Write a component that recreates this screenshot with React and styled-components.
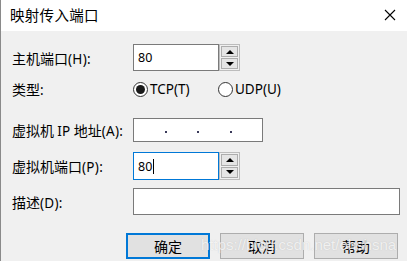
import React from 'react'
import styled, {createGlobalStyle} from "styled-components";

const GlobalStyle = createGlobalStyle`
  html, body {
    margin: 0;
    padding: 0;
    background: #f0f0f0;
  }
  * {
    box-sizing: border-box;
  }
`

const Dialog = styled.div`
  position: relative;
  width: 407px;
  height: 261px;
  background: #f0f0f0;
  border-left: 1px solid #8a8a8a;
  font-family: "Noto Sans CJK SC", "Noto Sans", sans-serif;
  color: #000;
  overflow: hidden;
`

const TitleBar = styled.div`
  height: 31px;
  background: #ffffff;
  display: flex;
  align-items: center;
  justify-content: space-between;
  padding: 0 11px 2px 9px;

  h1 {
    margin: 0;
    font-size: 14.5px;
    font-weight: 400;
    letter-spacing: 0.3px;
  }
`

const CloseIcon = styled.svg`
  width: 12px;
  height: 12px;
`

const Form = styled.div`
  padding: 0 0 0 11px;
`

const Row = styled.div`
  display: grid;
  grid-template-columns: 121px 1fr;
  align-items: center;
  height: ${p => p.$h}px;
  margin-top: ${p => p.$top}px;
`

const Label = styled.label`
  font-size: 14px;
  white-space: nowrap;

  small {
    font-family: "Noto Sans", sans-serif;
    font-size: 13.5px;
    letter-spacing: 0.3px;
  }
`

const Field = styled.div`
  display: flex;
  height: 100%;
`

const TextBox = styled.div`
  width: ${p => p.$w}px;
  height: 100%;
  background: #fff;
  border: 1px solid ${p => (p.$focus ? "#0078d7" : "#7a7a7a")};
  display: flex;
  align-items: center;
  padding-left: 4px;
  font-family: "Noto Sans", sans-serif;
  font-size: 12.5px;
`

const Caret = styled.span`
  display: inline-block;
  width: 1px;
  height: 15px;
  background: #000;
  margin-left: 1px;
`

const Spinner = styled.div`
  width: 21px;
  height: 100%;
  border: 1px solid #bcbcbc;
  display: flex;
  flex-direction: column;
  padding: 1px;
  gap: 1px;
  background: #f0f0f0;
`

const SpinButton = styled.div`
  flex: 1;
  background: #e5e5e5;
  border: 1px solid #adadad;
  display: flex;
  align-items: center;
  justify-content: center;

  &::after {
    content: "";
    border-left: 4px solid transparent;
    border-right: 4px solid transparent;
    ${p => (p.$down ? "border-top: 4px solid #000;" : "border-bottom: 4px solid #000;")}
  }
`

const RadioGroup = styled.div`
  display: flex;
  align-items: center;
`

const Radio = styled.div`
  display: flex;
  align-items: center;
  width: ${p => p.$w}px;
  font-family: "Noto Sans", sans-serif;
  font-size: 13.5px;
  gap: 2px;

  span.dot {
    width: 15px;
    height: 15px;
    border-radius: 50%;
    border: 1px solid #333;
    background: #fff;
    display: flex;
    align-items: center;
    justify-content: center;
  }

  span.dot::after {
    content: "";
    width: 9px;
    height: 9px;
    border-radius: 50%;
    background: ${p => (p.$checked ? "#1a1a1a" : "transparent")};
  }
`

const IpBox = styled(TextBox)`
  display: grid;
  grid-template-columns: 1fr 2px 1fr 2px 1fr 2px 1fr;
  align-items: center;
  padding: 4px 0 0 0;

  i {
    width: 2px;
    height: 2px;
    background: #3a3a5a;
  }
`

const Buttons = styled.div`
  display: flex;
  gap: 10px;
  margin-top: 18px;
  padding-left: 125px;
`

const Button = styled.button`
  width: 84px;
  height: 26px;
  font-family: "Noto Sans CJK SC", sans-serif;
  font-size: 14px;
  color: #000;
  background: #e1e1e1;
  border: ${p => (p.$primary ? "2px solid #0078d7" : "1px solid #adadad")};
  padding: 0;
`

const Watermark = styled.div`
  position: absolute;
  left: 200px;
  top: 236px;
  font-family: "Liberation Sans", Arial, sans-serif;
  font-size: 15px;
  color: rgba(255, 255, 255, 0.75);
  text-shadow: 0 0 1px rgba(160, 160, 160, 0.5);
  pointer-events: none;
  white-space: nowrap;
`

export default function App() {
    return (
        <Dialog>
            <GlobalStyle/>
            <TitleBar>
                <h1>映射传入端口</h1>
                <CloseIcon viewBox="0 0 12 12">
                    <path d="M1 1 L11 11 M11 1 L1 11" stroke="#000" strokeWidth="1.1" fill="none"/>
                </CloseIcon>
            </TitleBar>
            <Form>
                <Row $top={13} $h={27}>
                    <Label>主机端口<small>(H):</small></Label>
                    <Field>
                        <TextBox $w={86}>80</TextBox>
                        <Spinner>
                            <SpinButton/>
                            <SpinButton $down/>
                        </Spinner>
                    </Field>
                </Row>
                <Row $top={8} $h={16}>
                    <Label>类型<small>:</small></Label>
                    <RadioGroup>
                        <Radio $w={85} $checked><span className="dot"/>TCP(T)</Radio>
                        <Radio $w={80}><span className="dot"/>UDP(U)</Radio>
                    </RadioGroup>
                </Row>
                <Row $top={23} $h={24}>
                    <Label>虚拟机 <small>IP</small> 地址<small>(A):</small></Label>
                    <Field>
                        <IpBox $w={130}>
                            <span/><i/><span/><i/><span/><i/><span/>
                        </IpBox>
                    </Field>
                </Row>
                <Row $top={10} $h={28}>
                    <Label>虚拟机端口<small>(P):</small></Label>
                    <Field>
                        <TextBox $w={86} $focus>80<Caret/></TextBox>
                        <Spinner>
                            <SpinButton/>
                            <SpinButton $down/>
                        </Spinner>
                    </Field>
                </Row>
                <Row $top={8} $h={27}>
                    <Label>描述<small>(D):</small></Label>
                    <Field>
                        <TextBox $w={267}/>
                    </Field>
                </Row>
            </Form>
            <Buttons>
                <Button $primary>确定</Button>
                <Button>取消</Button>
                <Button>帮助</Button>
            </Buttons>
            <Watermark>https://blog.csdn.net/ohshsna</Watermark>
        </Dialog>
    )
}
